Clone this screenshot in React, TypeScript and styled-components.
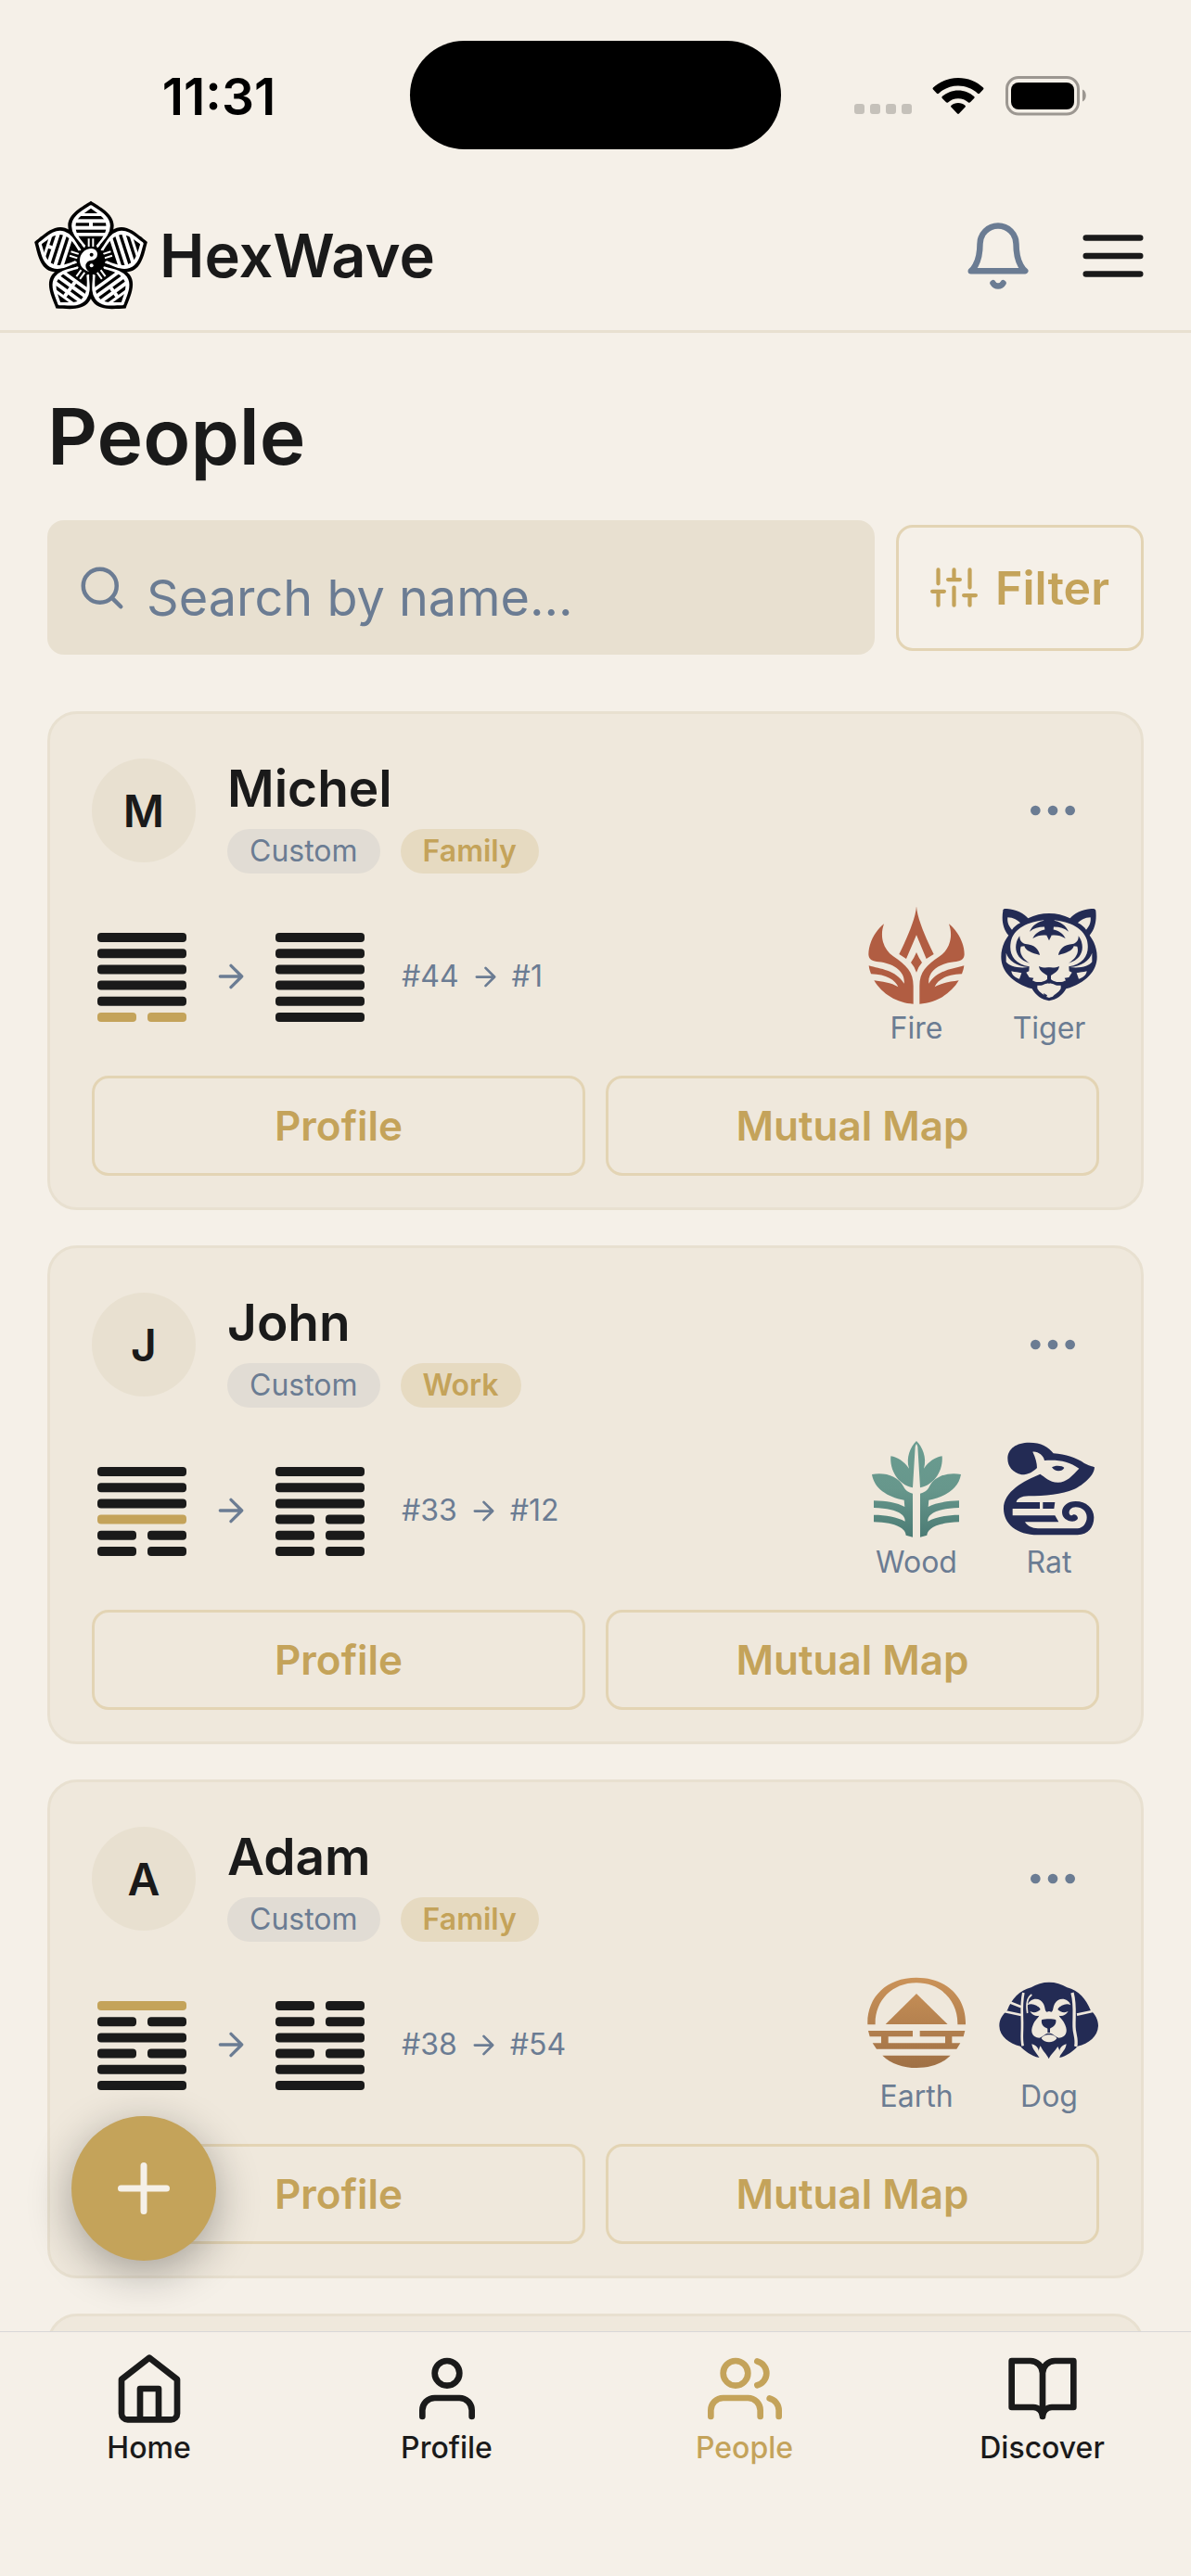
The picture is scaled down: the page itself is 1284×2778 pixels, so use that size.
import React from "react";
import styled, { createGlobalStyle } from "styled-components";

const color = {
  page: "#f5f0e8",
  card: "#efe8dc",
  line: "#e8e0d0",
  ink: "#1a1a1a",
  slate: "#6b7c93",
  gold: "#c4a35a",
  goldLine: "#e3d4b4",
  navy: "#232b54",
};

const GlobalStyle = createGlobalStyle`
  *, *::before, *::after { box-sizing: border-box; }
  html, body { margin: 0; background: ${color.page}; }
  body { font-family: Inter, "Liberation Sans", sans-serif; color: ${color.ink}; }
  button, input { font: inherit; color: inherit; margin: 0; }
  svg { display: block; flex: none; }
`;

const Screen = styled.div`
  position: relative;
  display: flex;
  flex-direction: column;
  height: 100vh;
  overflow: hidden;
  background: ${color.page};
`;

const StatusBar = styled.div`
  display: grid;
  grid-template-columns: 1fr auto 1fr;
  align-items: center;
  padding: 44px 0 34px;
`;

const Clock = styled.time`
  padding: 2px 0 0 30px;
  text-align: center;
  font-size: 55px;
  line-height: 64px;
  font-weight: 600;
  color: #000;
`;

const Island = styled.div`
  width: 400px;
  height: 117px;
  border-radius: 60px;
  background: #000;
`;

const StatusIcons = styled.div`
  display: flex;
  justify-content: center;
  padding-right: 34px;
`;

const Header = styled.header`
  display: flex;
  align-items: center;
  justify-content: space-between;
  padding: 21px 45px 21px 36px;
  border-bottom: 3px solid ${color.line};
`;

const Brand = styled.a`
  display: flex;
  align-items: center;
  gap: 12px;
  color: ${color.ink};
  text-decoration: none;
  font-size: 65px;
  line-height: 78px;
  font-weight: 600;
`;

const HeaderActions = styled.div`
  display: flex;
  gap: 46px;
`;

const IconButton = styled.button<{ $tint: string }>`
  display: flex;
  padding: 0;
  border: 0;
  background: none;
  color: ${(p) => p.$tint};
`;

const Main = styled.main`
  flex: 1;
  min-height: 0;
  overflow: hidden;
  padding: 59px 51px 0;
`;

const Title = styled.h1`
  margin: 0 0 38px;
  font-size: 84px;
  line-height: 105px;
  font-weight: 600;
`;

const Tools = styled.form`
  display: flex;
  align-items: center;
  gap: 23px;
  margin-bottom: 61px;
`;

const SearchBox = styled.label`
  flex: 1;
  min-width: 0;
  display: flex;
  align-items: center;
  gap: 21px;
  height: 145px;
  padding: 0 32px;
  border-radius: 18px;
  background: ${color.line};
  color: ${color.slate};
`;

const SearchInput = styled.input`
  flex: 1;
  min-width: 0;
  padding: 22px 0 0;
  border: 0;
  outline: 0;
  background: none;
  font-size: 54px;
  line-height: 66px;
  &::placeholder {
    color: ${color.slate};
    opacity: 1;
  }
`;

const FilterButton = styled.button`
  display: flex;
  align-items: center;
  gap: 19px;
  height: 136px;
  padding: 0 34px;
  border: 3px solid ${color.goldLine};
  border-radius: 18px;
  background: none;
  color: ${color.gold};
  font-size: 50px;
  font-weight: 600;
`;

const CardList = styled.div`
  display: flex;
  flex-direction: column;
  gap: 38px;
`;

const Card = styled.article`
  flex: none;
  min-height: 300px;
  padding: 45px 45px 34px;
  border: 3px solid ${color.line};
  border-radius: 32px;
  background: ${color.card};
`;

const CardTop = styled.div`
  display: flex;
  align-items: flex-start;
  gap: 34px;
`;

const Avatar = styled.div`
  display: flex;
  align-items: center;
  justify-content: center;
  width: 112px;
  height: 112px;
  margin-top: 3px;
  border-radius: 50%;
  background: ${color.line};
  font-size: 48px;
  font-weight: 600;
`;

const Identity = styled.div`
  flex: 1;
  display: flex;
  flex-direction: column;
  gap: 9px;
`;

const Name = styled.h2`
  margin: 0;
  font-size: 55px;
  line-height: 70px;
  font-weight: 600;
`;

const Tags = styled.div`
  display: flex;
  gap: 22px;
`;

const Tag = styled.span<{ $gold?: boolean }>`
  padding: 0 24px;
  border-radius: 24px;
  background: ${(p) => (p.$gold ? "#e6dac1" : "#e1dcd4")};
  color: ${(p) => (p.$gold ? color.gold : color.slate)};
  font-size: 32px;
  line-height: 48px;
  font-weight: ${(p) => (p.$gold ? 600 : 400)};
`;

const MoreButton = styled(IconButton)`
  align-items: center;
  height: 112px;
  margin-top: 3px;
  padding: 0 18px;
`;

const Reading = styled.div`
  display: flex;
  align-items: center;
  justify-content: space-between;
  margin: 34px 0 32px;
  color: ${color.slate};
  font-size: 32px;
  line-height: 38px;
`;

const Change = styled.div`
  display: flex;
  align-items: center;
  gap: 22px;
  padding-top: 2px;
`;

const HexBox = styled.div`
  padding: 2px 6px 0;
`;

const Numbers = styled.span`
  display: flex;
  align-items: center;
  gap: 12px;
  padding-left: 12px;
`;

const Signs = styled.div`
  display: flex;
  gap: 35px;
`;

const Sign = styled.figure`
  display: flex;
  flex-direction: column;
  align-items: center;
  gap: 6px;
  width: 108px;
  margin: 0;
`;

const Actions = styled.div`
  display: flex;
  gap: 22px;
`;

const ActionButton = styled.button`
  flex: 1;
  height: 108px;
  padding: 0;
  border: 3px solid ${color.goldLine};
  border-radius: 18px;
  background: none;
  color: ${color.gold};
  font-size: 44px;
  font-weight: 600;
`;

const AddButton = styled.button`
  position: absolute;
  left: 77px;
  bottom: 340px;
  display: flex;
  align-items: center;
  justify-content: center;
  width: 156px;
  height: 156px;
  padding: 0;
  border: 0;
  border-radius: 50%;
  background: ${color.gold};
  color: ${color.page};
  box-shadow: 0 12px 48px rgba(0, 0, 0, 0.32);
`;

const TabBar = styled.nav`
  display: grid;
  grid-template-columns: repeat(4, 1fr);
  padding: 21px 0 119px;
  border-top: 1px solid #d8d7d8;
  background: ${color.page};
`;

const Tab = styled.a<{ $active?: boolean }>`
  display: flex;
  flex-direction: column;
  align-items: center;
  gap: 5px;
  color: ${(p) => (p.$active ? color.gold : color.ink)};
  text-decoration: none;
  font-size: 32px;
  line-height: 38px;
  font-weight: 500;
`;

/* ---------- line icons ---------- */

type StrokeProps = { size: number; weight?: number; children: React.ReactNode };

const Stroke = ({ size, weight = 2, children }: StrokeProps) => (
  <svg
    width={size}
    height={size}
    viewBox="0 0 24 24"
    fill="none"
    stroke="currentColor"
    strokeWidth={weight}
    strokeLinecap="round"
    strokeLinejoin="round"
    aria-hidden="true"
  >
    {children}
  </svg>
);

const Arrow = ({ size }: { size: number }) => (
  <Stroke size={size}>
    <path d="M5 12h14M12 5l7 7-7 7" />
  </Stroke>
);

const tabs = [
  {
    label: "Home",
    icon: <path d="M3 9l9-7 9 7v11a2 2 0 0 1-2 2H5a2 2 0 0 1-2-2zM9 22V12h6v10" />,
  },
  {
    label: "Profile",
    icon: (
      <>
        <path d="M20 21v-2a4 4 0 0 0-4-4H8a4 4 0 0 0-4 4v2" />
        <circle cx="12" cy="7" r="4" />
      </>
    ),
  },
  {
    label: "People",
    icon: (
      <>
        <path d="M17 21v-2a4 4 0 0 0-4-4H5a4 4 0 0 0-4 4v2M23 21v-2a4 4 0 0 0-3-3.87M16 3.13a4 4 0 0 1 0 7.75" />
        <circle cx="9" cy="7" r="4" />
      </>
    ),
  },
  {
    label: "Discover",
    icon: <path d="M2 3h6a4 4 0 0 1 4 4v14a3 3 0 0 0-3-3H2zM22 3h-6a4 4 0 0 0-4 4v14a3 3 0 0 1 3-3h7z" />,
  },
];

const StatusGlyphs = () => (
  <svg width="250" height="44" viewBox="921 81 250 44" aria-hidden="true">
    <g fill="#c5c1ba">
      {[921, 938, 955, 972].map((x) => (
        <rect key={x} x={x} y="112" width="11" height="11" rx="3" />
      ))}
    </g>
    <g fill="#000">
      <path d="M1033 84c10.500 0 20 4 27 10.500.6.600.6 1.400 0 2l-4 4.200c-.6.600-1.400.6-2 0-5.700-5.200-13-8.200-21-8.200s-15.300 3-21 8.200c-.6.600-1.400.6-2 0l-4-4.200c-.6-.6-.6-1.400 0-2 7-6.500 16.500-10.500 27-10.500z" />
      <path d="M1033 97.500c6.600 0 12.600 2.500 17.200 6.600.6.600.6 1.400 0 2l-4.200 4.200c-.6.600-1.300.6-2 .1-3-2.600-6.800-4.200-11-4.200s-8 1.600-11 4.200c-.7.500-1.400.5-2-.1l-4.200-4.200c-.6-.6-.6-1.400 0-2 4.600-4.100 10.600-6.600 17.200-6.600z" />
      <path d="M1033 111c2.900 0 5.500 1 7.500 2.700.6.600.6 1.300 0 1.900l-6.600 6.900c-.5.600-1.300.6-1.800 0l-6.600-6.900c-.6-.6-.6-1.300 0-1.900 2-1.700 4.600-2.700 7.500-2.700z" />
      <rect x="1090" y="89" width="68" height="29" rx="8" />
    </g>
    <rect x="1085.500" y="83.500" width="77" height="39.500" rx="12.500" fill="none" stroke="#9c9791" strokeWidth="3" />
    <path d="M1167 96.500c5 2 5 11 0 13z" fill="#9c9791" />
  </svg>
);

/* ---------- brand mark: five petals round a yin-yang ---------- */

/* Each petal carries three bars, true = unbroken, listed from the tip inward. */
const petals: { turn: number; bars: boolean[] }[] = [
  { turn: 0, bars: [true, false, true] },
  { turn: 72, bars: [true, true, true] },
  { turn: 144, bars: [false, false, true] },
  { turn: 216, bars: [false, false, false] },
  { turn: 288, bars: [false, true, true] },
];

const Logo = () => (
  <svg width="124" height="119" viewBox="48 48 372 357" aria-hidden="true">
    <defs>
      <clipPath id="petal">
        <path d="M0-168C18-154 50-138 50-110C50-84 28-60 14-44H-14C-28-60-50-84-50-110C-50-138-18-154 0-168Z" />
      </clipPath>
    </defs>
    <g transform="translate(234 242)">
      {petals.map(({ turn }) => (
        <path
          key={turn}
          transform={`rotate(${turn})`}
          d="M0-192C26-174 74-152 74-112C74-78 40-35 0 0C-40-35-74-78-74-112C-74-152-26-174 0-192Z"
        />
      ))}
      {petals.map(({ turn, bars }) => (
        <g key={turn} transform={`rotate(${turn})`}>
          <path
            d="M-19-46C-34-66-57-84-57-111C-57-142-22-157 0-173C22-157 57-142 57-111C57-84 34-66 19-46Z"
            fill="#fff"
            stroke="#fff"
            strokeWidth="11"
            strokeLinejoin="round"
          />
          <g clipPath="url(#petal)">
            <rect x="-30" y="-168" width="60" height="16" />
            {bars.map((solid, i) => (
              <g key={i}>
                <rect x="-52" y={-143 + i * 22} width="104" height="10" />
                {!solid && <rect x="-6" y={-144 + i * 22} width="12" height="12" fill="#fff" />}
              </g>
            ))}
            <rect x="-50" y="-78" width="100" height="40" />
          </g>
        </g>
      ))}
      <circle r="50" />
      {petals.map(({ turn }) => (
        <path
          key={turn}
          transform={`rotate(${turn})`}
          d="M-7-44V-70M7-44V-70M-20-42L-27-52M20-42L27-52"
          stroke="#fff"
          strokeWidth="6"
        />
      ))}
      <g transform="translate(2 0)">
        <circle r="43" />
        <path d="M0-38A38 38 0 0 0 0 38A19 19 0 0 1 0 0A19 19 0 0 0 0-38Z" fill="#fff" />
        <circle cy="-18" r="6" />
        <circle cy="17" r="6" fill="#fff" />
      </g>
    </g>
  </svg>
);

/* ---------- element and zodiac emblems ---------- */

const Emblem = ({ box, children }: { box: string; children: React.ReactNode }) => (
  <svg width="108" height="108" viewBox={box} aria-hidden="true">
    {children}
  </svg>
);

/* Draws its content twice, the second time mirrored about x = axis. */
const Mirrored = ({ axis, children }: { axis: number; children: React.ReactNode }) => (
  <>
    {children}
    <g transform={`translate(${axis * 2} 0) scale(-1 1)`}>{children}</g>
  </>
);

const Fire = () => (
  <Emblem box="45 48 324 324">
    <g fill="#b15d42">
      <path d="M207 52C210 95 240 160 263 207L239 222L207 145L174 222L151 207C174 160 204 95 207 52Z" />
      <path d="M207 201Q214 218 225 234Q214 246 207 266Q200 246 189 234Q200 218 207 201Z" />
      <Mirrored axis={207}>
        <path d="M102 109C87 150 100 192 132 214C175 243 197 265 197 310V368C145 366 95 335 70 292C95 296 125 299 148 313C140 292 110 272 60 271C57 262 54 255 53 244C90 255 140 258 167 302C172 262 130 236 85 232C66 230 53 226 52 208C52 170 75 130 102 109Z" />
      </Mirrored>
    </g>
  </Emblem>
);

const Wood = () => (
  <Emblem box="45 37 324 324">
    <defs>
      <linearGradient id="wood" x1="0" y1="43" x2="0" y2="354" gradientUnits="userSpaceOnUse">
        <stop offset="0" stopColor="#6a9c90" />
        <stop offset="0.500" stopColor="#67978c" />
        <stop offset="1" stopColor="#4b7b74" />
      </linearGradient>
    </defs>
    <g fill="url(#wood)">
      <Mirrored axis={207}>
        <path d="M207 43C188 62 172 96 183 132C168 110 146 95 124 92C120 136 146 184 195 194L203 62Q205 54 207 52Z" />
        <path d="M63 151C104 143 148 156 165 190C171 203 184 211 195 213V354L173 348C172 328 146 307 69 305V282C108 282 145 289 170 303C172 288 158 262 69 259V236C110 237 145 243 169 256L167 234C112 224 70 196 63 151Z" />
      </Mirrored>
    </g>
  </Emblem>
);

const Earth = () => (
  <Emblem box="45 55 324 324">
    <defs>
      <linearGradient id="earth" x1="0" y1="69" x2="0" y2="361" gradientUnits="userSpaceOnUse">
        <stop offset="0" stopColor="#cb9359" />
        <stop offset="1" stopColor="#9f7045" />
      </linearGradient>
    </defs>
    <g fill="url(#earth)">
      <path d="M49 221C46 135 108 69 207 69C306 69 369 135 366 221H340C342 145 287 86 207 86C127 86 72 145 74 221Z" />
      <path d="M207 121L308 220H107Z" />
      <path d="M51 241H195V260H116V281H300V260H218V241H364L359 260H322V281H349L337 300H78L65 281H93V260H56Z" />
      <path d="M97 321H317C290 348 250 361 207 361C165 361 125 348 97 321Z" />
    </g>
  </Emblem>
);

const Tiger = () => (
  <Emblem box="474 48 324 324">
    <path
      fill={color.navy}
      d="M487 66C486 60 492 59 500 60C530 62 556 76 568 91C590 80 612 75 636 75C660 75 682 80 704 91C716 76 742 62 772 60C780 59 786 60 787 66C790 95 786 125 767 146C782 165 791 190 791 215C791 262 755 300 691 319C680 340 660 354 636 358C612 354 592 340 581 319C517 300 481 262 481 215C481 190 490 165 505 146C486 125 482 95 487 66Z"
    />
    <g fill={color.card}>
      <Mirrored axis={636}>
        <path d="M502 88C520 88 536 98 543 106C530 112 522 120 516 128C504 116 500 100 502 88Z" />
        <path d="M637 97C575 97 528 120 514 160C503 200 518 238 572 247L571 262L562 266L572 282L586 284L582 292C598 302 618 296 637 290Z" />
        <path d="M497 203C505 228 532 246 570 249C536 254 506 246 497 232Z" />
        <path d="M514 262C526 266 536 265 547 268L540 287C528 284 516 276 514 262Z" />
        <path d="M637 301C622 300 618 311 598 308L598 318C605 332 618 336 624 344L637 348Z" />
      </Mirrored>
    </g>
    <g fill={color.navy}>
      <path d="M618 90H654L649 136L636 163L623 136Z" />
      <Mirrored axis={636}>
        <path d="M626 97C600 101 582 114 573 134C588 122 604 118 626 119Z" />
        <path d="M626 127C604 130 590 142 583 156C598 147 612 144 628 146Z" />
        <path d="M541 148C520 176 522 222 573 236C550 222 538 202 545 182L556 181C560 196 580 203 606 210C602 190 588 176 560 174C548 172 540 162 541 148Z" />
        <path d="M603 246C616 252 626 250 637 250V302C624 298 610 308 590 302C604 300 622 296 630 288V276C618 268 605 262 603 246Z" />
      </Mirrored>
      <path d="M612 334L620 340L618 333L630 340L626 349Z" />
    </g>
  </Emblem>
);

const Rat = () => (
  <Emblem box="474 37 324 324">
    <g fill={color.navy}>
      <path d="M547 152C518 145 502 125 502 100C502 68 530 48 572 48C610 48 635 62 650 83C690 85 725 98 750 115C762 122 778 125 783 128C782 160 735 192 715 200C680 216 620 221 570 221C545 221 533 230 530 241H606V262H518V284H655L667 305H558C565 318 580 325 600 326H728C746 325 758 308 758 290C758 270 742 257 722 257C708 257 700 266 701 277C703 285 711 286 714 281C720 279 728 284 729 292C728 300 718 303 712 303C694 302 678 292 678 273C678 252 698 238 722 238C755 238 781 260 781 290C781 322 762 347 728 347H600C530 347 489 310 489 262C489 205 555 172 607 150C622 158 635 177 665 177C692 177 712 155 733 132C700 108 665 103 621 106C618 90 600 76 583 78C592 95 597 115 597 130C585 142 570 152 547 152Z" />
      <path d="M616 241H655L652 262H616Z" />
      <path d="M645 128C655 120 680 122 685 130C680 142 655 145 645 128Z" />
    </g>
  </Emblem>
);

const Dog = () => (
  <Emblem box="474 55 324 324">
    <path
      fill={color.navy}
      d="M578 101C595 90 615 84 636 84C657 84 677 90 694 101C732 110 756 140 770 174C786 188 795 205 795 225C793 260 765 282 728 291C715 306 695 322 670 328C673 315 670 302 664 292C655 308 643 314 635 332C628 316 616 308 608 290C600 304 602 318 604 328C577 322 557 306 543 291C508 282 476 260 475 225C475 205 484 190 501 174C514 140 540 110 578 101Z"
    />
    <g fill="none" stroke={color.card}>
      <path d="M553 118C544 160 550 190 549 228C549 252 546 268 551 290" strokeWidth="8" />
      <path d="M711 118C722 160 716 190 717 228C717 252 728 268 722 292" strokeWidth="10" />
      <path d="M508 149L546 164M490 178L546 190M726 189L776 178" strokeWidth="8" />
      <path d="M580 124C562 136 562 160 566 184" strokeWidth="5" />
    </g>
    <g fill={color.card}>
      <Mirrored axis={636}>
        <path d="M566 158C574 134 606 130 618 154C624 166 622 176 628 180L637 178V250C624 246 618 262 604 264C582 262 574 244 584 222C590 206 600 200 604 192C594 196 582 190 574 178C584 184 600 182 608 172C598 156 578 150 566 158Z" />
        <path d="M580 284C598 288 606 302 604 328C594 310 582 302 580 284Z" />
      </Mirrored>
      <path d="M611 266C618 250 654 250 661 266C650 282 622 282 611 266Z" />
    </g>
    <g fill={color.navy}>
      <path d="M612 206C625 202 648 202 658 206C661 224 645 230 639 234V247H631V234C622 230 609 224 612 206Z" />
      <Mirrored axis={636}>
        <path d="M576 168C586 158 602 160 607 170C602 179 584 180 576 168Z" />
      </Mirrored>
    </g>
  </Emblem>
);

/* ---------- hexagram ---------- */

/* Six lines from top to bottom: "-" unbroken, ":" broken. */
const Hexagram = ({ lines, changing }: { lines: string; changing?: number }) => (
  <HexBox>
    <svg width="96" height="96" viewBox="0 0 96 96" aria-hidden="true">
      {lines.split("").map((kind, i) => {
        const y = i * 17.2;
        const fill = i === changing ? color.gold : color.ink;
        return kind === "-" ? (
          <rect key={i} y={y} width="96" height="10" rx="4" fill={fill} />
        ) : (
          <g key={i} fill={fill}>
            <rect y={y} width="42" height="10" rx="4" />
            <rect x="54" y={y} width="42" height="10" rx="4" />
          </g>
        );
      })}
    </svg>
  </HexBox>
);

/* ---------- people ---------- */

type Person = {
  name: string;
  group: string;
  from: { lines: string; changing: number; number: number };
  to: { lines: string; number: number };
  signs: { label: string; Art: () => React.JSX.Element }[];
};

const people: Person[] = [
  {
    name: "Michel",
    group: "Family",
    from: { lines: "-----:", changing: 5, number: 44 },
    to: { lines: "------", number: 1 },
    signs: [
      { label: "Fire", Art: Fire },
      { label: "Tiger", Art: Tiger },
    ],
  },
  {
    name: "John",
    group: "Work",
    from: { lines: "----::", changing: 3, number: 33 },
    to: { lines: "---:::", number: 12 },
    signs: [
      { label: "Wood", Art: Wood },
      { label: "Rat", Art: Rat },
    ],
  },
  {
    name: "Adam",
    group: "Family",
    from: { lines: "-:-:--", changing: 0, number: 38 },
    to: { lines: "::-:--", number: 54 },
    signs: [
      { label: "Earth", Art: Earth },
      { label: "Dog", Art: Dog },
    ],
  },
];

const PersonCard = ({ person }: { person: Person }) => (
  <Card>
    <CardTop>
      <Avatar aria-hidden="true">{person.name[0]}</Avatar>
      <Identity>
        <Name>{person.name}</Name>
        <Tags>
          <Tag>Custom</Tag>
          <Tag $gold>{person.group}</Tag>
        </Tags>
      </Identity>
      <MoreButton type="button" $tint={color.slate} aria-label={`More options for ${person.name}`}>
        <Stroke size={64}>
          <circle cx="5" cy="12" r="1" />
          <circle cx="12" cy="12" r="1" />
          <circle cx="19" cy="12" r="1" />
        </Stroke>
      </MoreButton>
    </CardTop>
    <Reading>
      <Change>
        <Hexagram lines={person.from.lines} changing={person.from.changing} />
        <Arrow size={40} />
        <Hexagram lines={person.to.lines} />
        <Numbers>
          #{person.from.number}
          <Arrow size={33} />
          <span>#{person.to.number}</span>
        </Numbers>
      </Change>
      <Signs>
        {person.signs.map(({ label, Art }) => (
          <Sign key={label}>
            <Art />
            <figcaption>{label}</figcaption>
          </Sign>
        ))}
      </Signs>
    </Reading>
    <Actions>
      <ActionButton type="button">Profile</ActionButton>
      <ActionButton type="button">Mutual Map</ActionButton>
    </Actions>
  </Card>
);

export default function App() {
  return (
    <Screen>
      <GlobalStyle />
      <StatusBar>
        <Clock>11:31</Clock>
        <Island />
        <StatusIcons>
          <StatusGlyphs />
        </StatusIcons>
      </StatusBar>
      <Header>
        <Brand href="#home">
          <Logo />
          HexWave
        </Brand>
        <HeaderActions>
          <IconButton type="button" $tint={color.slate} aria-label="Notifications">
            <Stroke size={78}>
              <path d="M6 8a6 6 0 0 1 12 0c0 7 3 9 3 9H3s3-2 3-9M10.300 21a1.940 1.940 0 0 0 3.400 0" />
            </Stroke>
          </IconButton>
          <IconButton type="button" $tint={color.ink} aria-label="Menu">
            <Stroke size={78}>
              <path d="M3 6h18M3 12h18M3 18h18" />
            </Stroke>
          </IconButton>
        </HeaderActions>
      </Header>
      <Main>
        <Title>People</Title>
        <Tools>
          <SearchBox>
            <Stroke size={54}>
              <circle cx="11" cy="11" r="8" />
              <path d="M21 21l-4.300-4.300" />
            </Stroke>
            <SearchInput type="text" placeholder="Search by name..." aria-label="Search by name" />
          </SearchBox>
          <FilterButton type="button">
            <Stroke size={51}>
              <path d="M4 21v-7M4 10V3M12 21v-9M12 8V3M20 21v-5M20 12V3M1 14h6M9 8h6M17 16h6" />
            </Stroke>
            Filter
          </FilterButton>
        </Tools>
        <CardList>
          {people.map((person) => (
            <PersonCard key={person.name} person={person} />
          ))}
          <Card aria-hidden="true" />
        </CardList>
      </Main>
      <AddButton type="button" aria-label="Add person">
        <Stroke size={84}>
          <path d="M5 12h14M12 5v14" />
        </Stroke>
      </AddButton>
      <TabBar>
        {tabs.map(({ label, icon }) => (
          <Tab key={label} href={`#${label.toLowerCase()}`} $active={label === "People"}>
            <Stroke size={80}>{icon}</Stroke>
            {label}
          </Tab>
        ))}
      </TabBar>
    </Screen>
  );
}
